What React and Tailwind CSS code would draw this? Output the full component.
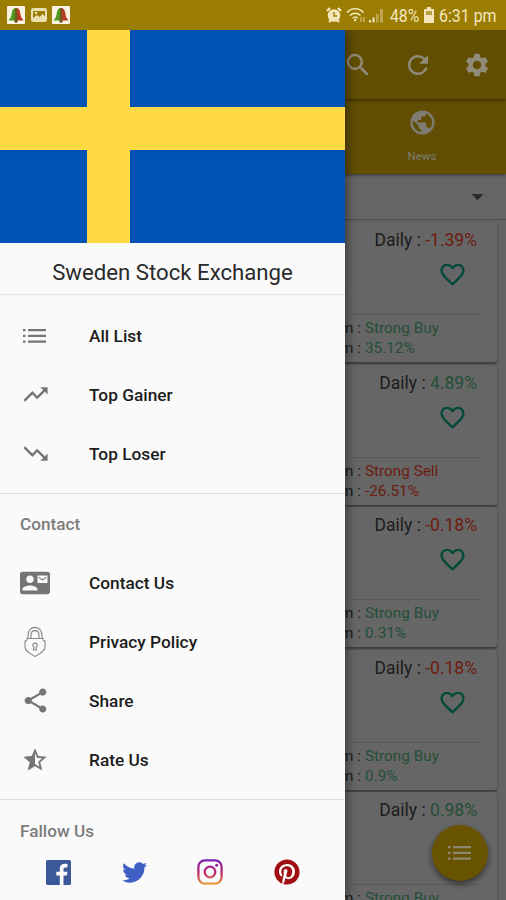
import React from "react";
import {
  MdSearch, MdRefresh, MdSettings, MdPublic, MdFavoriteBorder,
  MdTrendingUp, MdTrendingDown, MdContactMail, MdShare, MdStarHalf, MdArrowDropDown,
} from "react-icons/md";
import { FaTwitter, FaPinterest } from "react-icons/fa";

const GREEN = "text-[#254f37]";
const RED = "text-[#6c1c10]";

const cards = [
  { daily: "-1.39%", dailyTone: RED, signal: "Strong Buy", value: "35.12%", tone: GREEN },
  { daily: "4.89%", dailyTone: GREEN, signal: "Strong Sell", value: "-26.51%", tone: RED },
  { daily: "-0.18%", dailyTone: RED, signal: "Strong Buy", value: "0.31%", tone: GREEN },
  { daily: "-0.18%", dailyTone: RED, signal: "Strong Buy", value: "0.9%", tone: GREEN },
  { daily: "0.98%", dailyTone: GREEN, signal: "Strong Buy", value: "", tone: GREEN },
];

function BellBadge() {
  return (
    <svg viewBox="0 0 18 18" className="size-[18px]">
      <rect width="18" height="18" rx="1" fill="#f8f3e2" />
      <path d="M8 2C5.500 3 5 5 4.500 8.500C4.200 11 3 12.500 1.500 14.500H9V2Z" fill="#4f9a1c" />
      <path d="M9 2H10C12.500 3 13 5 13.500 8.500C13.800 11 15 12.500 16.500 14.500H9Z" fill="#b93a22" />
      <path d="M8.200 2H9.800L10.500 14.500H7.500Z" fill="#6d5a1d" />
      <circle cx="9" cy="15.200" r="1.500" fill="#6d4c1a" />
    </svg>
  );
}

function ListIcon() {
  return (
    <svg viewBox="0 0 24 14" className="h-[14px] w-6" fill="currentColor">
      <path d="M0 0H2.500V2.300H0ZM0 5.800H2.500V8.100H0ZM0 11.500H2.500V13.800H0ZM5 0H23V2.300H5ZM5 5.800H23V8.100H5ZM5 11.500H23V13.800H5Z" />
    </svg>
  );
}

function StatusBar() {
  return (
    <header className="flex h-[30px] shrink-0 items-center bg-[#9c7d03] pl-[7px] pr-[9px] text-[#f3e6bd]">
      <BellBadge />
      <svg viewBox="0 0 16 14" className="ml-[6px] h-[14px] w-4">
        <rect width="16" height="14" rx="2.500" fill="#eadfae" />
        <path d="M2 3H14V8L11.500 6L8.500 9L6 7L2 10Z" fill="#9c7d03" />
        <circle cx="5" cy="5" r="1.300" fill="#eadfae" />
      </svg>
      <span className="ml-[5px] flex"><BellBadge /></span>
      <span className="grow" />
      <svg viewBox="0 0 16 16" className="size-4">
        <circle cx="8" cy="8.500" r="6.300" fill="currentColor" />
        <path d="M1 4L4 1M15 4L12 1M3 15L5 13M13 15L11 13" stroke="currentColor" strokeWidth="2.400" />
        <path d="M8 5V9H11" fill="none" stroke="#9c7d03" strokeWidth="1.500" />
      </svg>
      <svg viewBox="0 0 20 16" className="ml-[4px] h-4 w-5" fill="none" stroke="currentColor" strokeWidth="1.600">
        <path d="M1 5.500C5.500 .5 13 .5 17.500 5.500M4 8.500C7 5.500 11.500 5.500 14.500 8.500M6.700 11.300C8.300 9.700 10.200 9.700 11.800 11.300" />
        <circle cx="9.200" cy="13" r="1.200" fill="currentColor" stroke="none" />
        <path d="M15 10V15M18 10V15" stroke="#c5ad57" />
      </svg>
      <svg viewBox="0 0 16 16" className="ml-[2px] h-4 w-4">
        <path d="M1 13H3V15.500H1ZM4.500 10.500H6.500V15.500H4.500Z" fill="#f3e6bd" />
        <path d="M8 7H10.500V15.500H8ZM12 2H15V15.500H12Z" fill="#bda551" />
      </svg>
      <span className="ml-[6px] w-[30px] origin-left scale-x-[.9] whitespace-nowrap pt-[3px] text-[17.500px] leading-none">48%</span>
      <svg viewBox="0 0 10 16" className="ml-[4px] h-4 w-[10px]">
        <path d="M3 0H7V2H9Q10 2 10 3V15Q10 16 9 16H1Q0 16 0 15V3Q0 2 1 2H3Z" fill="currentColor" />
        <path d="M2 4H8V8H2Z" fill="#b69c43" />
      </svg>
      <span className="ml-[5px] w-[58px] origin-left scale-x-[.91] whitespace-nowrap pt-[3px] text-[17.500px] leading-none">6:31 pm</span>
    </header>
  );
}

function Flag() {
  return (
    <div className="grid h-[213px] shrink-0 grid-cols-[87px_43px_215px] grid-rows-[77px_43px_93px] bg-[#0052b4]">
      <div className="col-start-2 row-span-3 row-start-1 bg-[#ffda44]" />
      <div className="col-span-3 col-start-1 row-start-2 bg-[#ffda44]" />
    </div>
  );
}

function LockIcon() {
  return (
    <svg viewBox="0 0 24 32" className="h-8 w-6" fill="none" stroke="#858585" strokeWidth="1.100">
      <path d="M5 12.500V9.500C5 -1.300 19 -1.300 19 9.500V12.500M8 12.500V9.500C8 3 16 3 16 9.500V12.500Z" />
      <path d="M4 12.500H20V14Q20 15 22 15V21C22 25 17 27.500 12 30.500C7 27.500 2 25 2 21V15Q4 15 4 14Z" />
      <path d="M11 21.300A2.200 2.200 0 1 1 13 21.300L13.500 24H10.500Z" />
    </svg>
  );
}

function Item({ icon, label }) {
  return (
    <li className="flex h-[59px] items-center">
      <span className="flex w-[70px] items-center justify-center text-[#757575]">{icon}</span>
      <span className="ml-[19px] pt-[2px] text-[17.300px] font-medium text-[#1c1c1c]">{label}</span>
    </li>
  );
}

function Facebook() {
  return (
    <svg viewBox="0 0 25 25" className="size-[25px]">
      <rect width="25" height="25" rx="1.500" fill="#3b5998" />
      <path d="M13.800 25V15.500H10.300V11.700H13.800V8.800C13.800 5.500 15.800 3.800 18.700 3.800C20 3.800 21 3.900 21.500 4V7.500H19.500C17.900 7.500 17.500 8.300 17.500 9.400V11.700H21.400L20.900 15.500H17.500V25Z" fill="#fafafa" />
    </svg>
  );
}

function Instagram() {
  return (
    <svg viewBox="0 0 26 26" className="size-[26px]" fill="none" stroke="url(#insta)" strokeWidth="2.300">
      <defs>
        <linearGradient id="insta" gradientUnits="userSpaceOnUse" x1="13" y1="0" x2="13" y2="26">
          <stop offset="0" stopColor="#7a1fb0" />
          <stop offset=".55" stopColor="#c12a6b" />
          <stop offset="1" stopColor="#eda83f" />
        </linearGradient>
      </defs>
      <rect x="1.400" y="1.400" width="23.200" height="23.200" rx="6.500" />
      <circle cx="13" cy="13" r="5.300" />
      <circle cx="19.700" cy="6.300" r="1.500" fill="#8a2298" stroke="none" />
    </svg>
  );
}

function Drawer() {
  return (
    <aside className="z-10 flex w-[345px] shrink-0 flex-col bg-[#fafafa] shadow-[2px_0_10px_rgba(0,0,0,.45)]">
      <Flag />
      <h1 className="flex h-[52px] shrink-0 items-center justify-center border-b border-[#e6e6e6] pt-[8px] text-[22.200px] text-[#2a2a2a]">
        Sweden Stock Exchange
      </h1>
      <ul className="h-[199px] shrink-0 border-b border-[#dcdcdc] pt-[11px]">
        <Item icon={<ListIcon />} label="All List" />
        <Item icon={<MdTrendingUp size={29} />} label="Top Gainer" />
        <Item icon={<MdTrendingDown size={29} />} label="Top Loser" />
      </ul>
      <section className="h-[306px] shrink-0 border-b border-[#dcdcdc]">
        <h2 className="flex h-[59px] items-center pl-5 pt-[2px] text-[17.200px] font-medium text-[#7c7c7c]">Contact</h2>
        <ul>
          <Item icon={<MdContactMail size={30} />} label="Contact Us" />
          <Item icon={<LockIcon />} label="Privacy Policy" />
          <Item icon={<MdShare size={29} />} label="Share" />
          <Item icon={<MdStarHalf size={28} />} label="Rate Us" />
        </ul>
      </section>
      <section>
        <h2 className="flex h-[60px] items-center pl-5 pt-[3px] text-[17.200px] font-medium text-[#7c7c7c]">Fallow Us</h2>
        <div className="-mt-[2px] flex h-[28px] items-center justify-between pl-[46px] pr-[45px]">
          <Facebook />
          <FaTwitter size={25} color="#3f5fc4" />
          <Instagram />
          <FaPinterest size={26} color="#a00d12" />
        </div>
      </section>
    </aside>
  );
}

function Card({ daily, dailyTone, signal, value, tone }) {
  return (
    <article className="-ml-4 mr-[9px] flex h-[140px] shrink-0 flex-col rounded-[3px] bg-[#666] shadow-[0_1.500px_2.500px_rgba(0,0,0,.4)]">
      <div className="mt-[6px] flex justify-end whitespace-pre pr-5 text-[17.500px] leading-6 text-[#1c1c1c]">
        {"Daily : "}<span className={dailyTone}>{daily}</span>
      </div>
      <div className="mt-[8px] flex justify-end pr-[30px] text-[#044a3a]">
        <MdFavoriteBorder size={29} />
      </div>
      <div className="ml-[22px] mr-[17px] mt-[25px] border-b border-[#5a5a5a]" />
      <div className="mt-[3px] grid grid-cols-[32px_1fr] gap-x-[4px] text-[15.300px] leading-5 text-[#1c1c1c]">
        <span className="flex justify-end whitespace-pre">m :</span><span className={tone}>{signal}</span>
        {value && <><span className="flex justify-end whitespace-pre">m :</span><span className={tone}>{value}</span></>}
      </div>
    </article>
  );
}

function Screen() {
  return (
    <main className="relative flex grow flex-col overflow-hidden bg-[#646464]">
      <div className="z-[2] flex h-[69px] shrink-0 items-center justify-between bg-[#614e02] pr-[15px] text-[#918b7a] shadow-[0_1px_3px_rgba(0,0,0,.5)]">
        <MdSearch size={30} className="-ml-[2px]" /><MdRefresh size={30} /><MdSettings size={28} />
      </div>
      <div className="z-[1] flex h-[75px] shrink-0 flex-col items-center bg-[#614e02] pr-[7px] pt-[9px] text-[#7e7c73] shadow-[0_1px_3px_rgba(0,0,0,.5)]">
        <MdPublic size={29} />
        <span className="mt-[11px] text-[11.500px] leading-4">News</span>
      </div>
      <div className="flex h-[46px] shrink-0 items-center justify-end border-b border-[#505050] bg-[#666] pr-[14px] text-[#2b2b2b]">
        <MdArrowDropDown size={29} />
      </div>
      <div className="flex flex-col gap-[2.500px] pt-[2px]">
        {cards.map((card, i) => <Card key={i} {...card} />)}
      </div>
      <button className="absolute bottom-[19px] right-[18.500px] flex size-[56px] items-center justify-center rounded-full bg-[#685400] pl-[1px] text-[#8d8770] shadow-[0_3px_6px_rgba(0,0,0,.5)]">
        <ListIcon />
      </button>
    </main>
  );
}

export default function App() {
  return (
    <div className="flex h-[900px] w-[506px] flex-col overflow-hidden font-[Roboto,sans-serif]">
      <StatusBar />
      <div className="flex min-h-0 grow overflow-hidden">
        <Drawer />
        <Screen />
      </div>
    </div>
  );
}
